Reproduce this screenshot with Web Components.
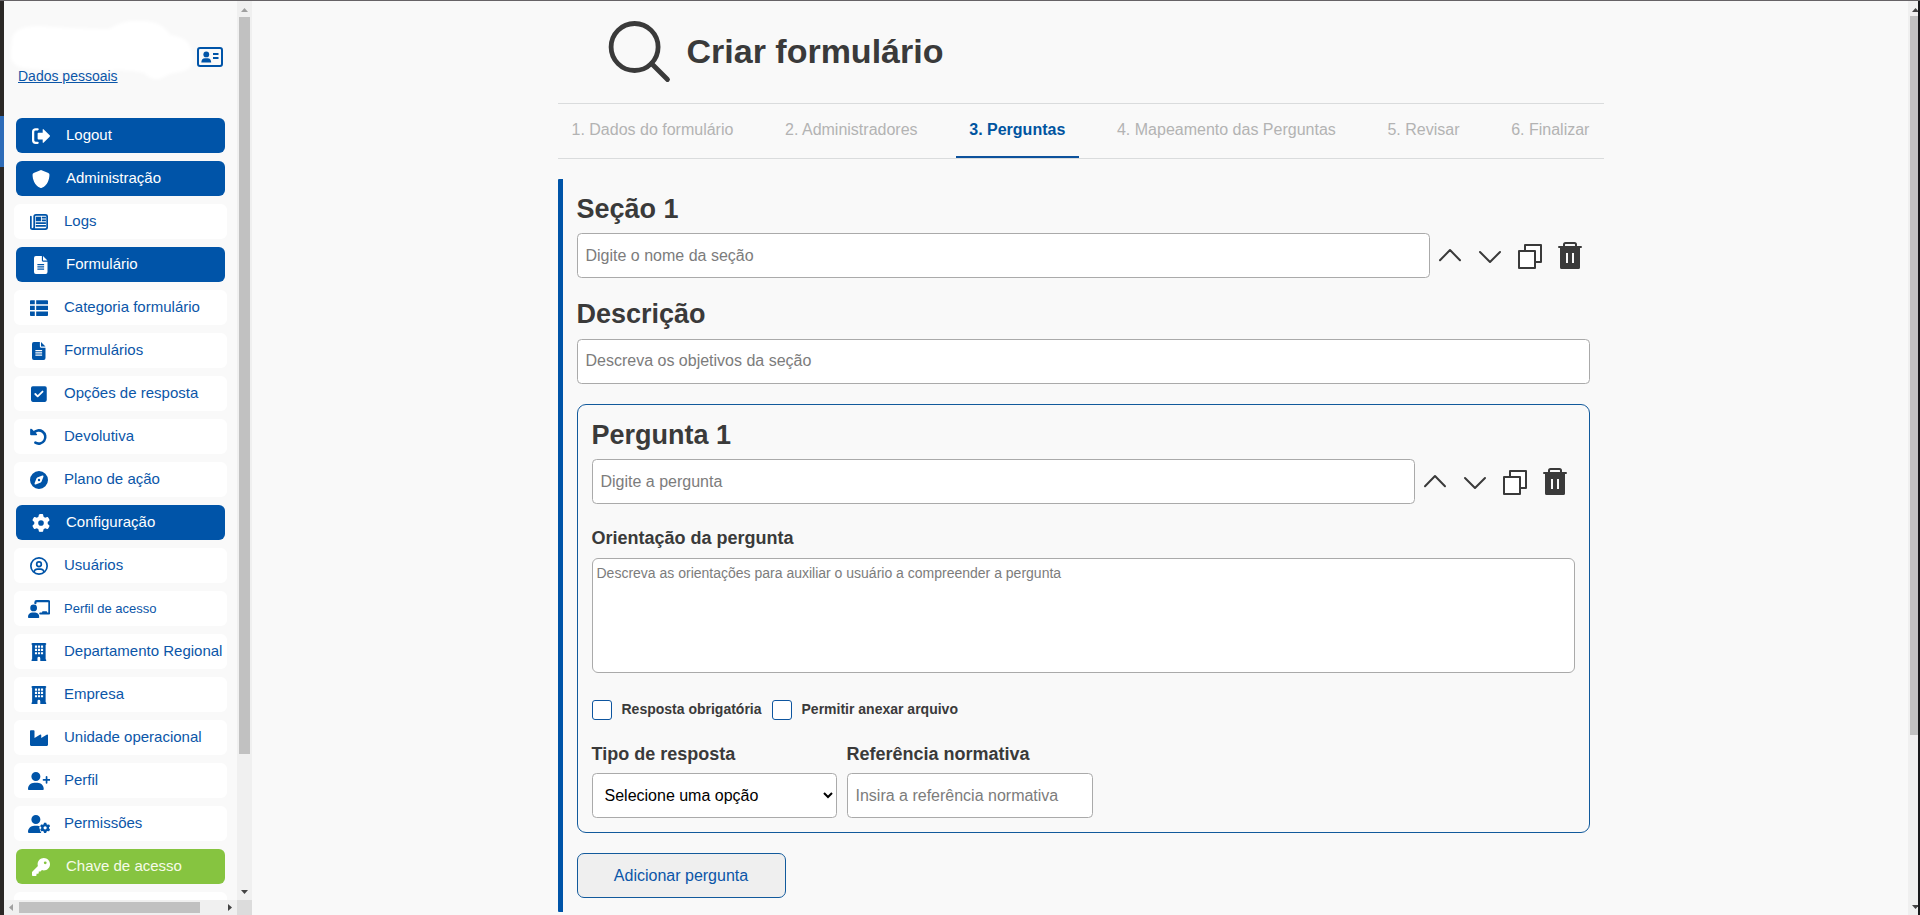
<!DOCTYPE html>
<html lang="pt-BR">
<head>
<meta charset="utf-8">
<title>Criar formulário</title>
<style>
html,body{margin:0;height:100%;overflow:hidden;background:#f9f9f9;font-family:"Liberation Sans",Arial,sans-serif;color:#3a3a3a}
</style>
</head>
<body>
<app-shell></app-shell>
<script>
const define = (name, html, setup) => customElements.define(name, class extends HTMLElement {
  connectedCallback() {
    if (this.shadowRoot) return;
    const root = this.attachShadow({mode: 'open'});
    const t = document.createElement('template');
    t.innerHTML = typeof html === 'function' ? html(this) : html;
    root.append(t.content.cloneNode(true));
    if (setup) setup(root, this);
  }
});

const GEAR = 'M495.9 166.6c3.2 8.7 .5 18.4-6.4 24.6l-43.3 39.4c1.1 8.3 1.7 16.8 1.7 25.4s-.6 17.1-1.7 25.4l43.3 39.4c6.9 6.2 9.6 15.9 6.4 24.6c-4.4 11.9-9.7 23.3-15.8 34.3l-4.7 8.1c-6.6 11-14 21.4-22.1 31.2c-5.9 7.2-15.7 9.6-24.5 6.8l-55.7-17.7c-13.4 10.3-28.2 18.9-44 25.4l-12.5 57.1c-2 9.1-9 16.3-18.2 17.8c-13.8 2.3-28 3.5-42.5 3.5s-28.7-1.2-42.5-3.5c-9.2-1.5-16.2-8.7-18.2-17.8l-12.5-57.1c-15.8-6.5-30.6-15.1-44-25.4L83.1 425.9c-8.8 2.8-18.6 .3-24.5-6.8c-8.1-9.8-15.5-20.2-22.1-31.2l-4.7-8.1c-6.1-11-11.4-22.4-15.8-34.3c-3.2-8.7-.5-18.4 6.4-24.6l43.3-39.4C64.6 273.1 64 264.6 64 256s.6-17.1 1.7-25.4L22.4 191.2c-6.9-6.2-9.6-15.9-6.4-24.6c4.4-11.9 9.7-23.3 15.8-34.3l4.7-8.1c6.6-11 14-21.4 22.1-31.2c5.9-7.2 15.7-9.6 24.5-6.8l55.7 17.7c13.4-10.3 28.2-18.9 44-25.4l12.5-57.1c2-9.1 9-16.3 18.2-17.8C227.3 1.2 241.5 0 256 0s28.7 1.2 42.5 3.5c9.2 1.5 16.2 8.7 18.2 17.8l12.5 57.1c15.8 6.5 30.6 15.1 44 25.4l55.7-17.7c8.8-2.8 18.6-.3 24.5 6.8c8.1 9.8 15.5 20.2 22.1 31.2l4.7 8.1c6.1 11 11.4 22.4 15.8 34.3zM256 336a80 80 0 1 0 0-160 80 80 0 1 0 0 160z';
const BUILDING = '<path fill-rule="evenodd" d="M48 0H400Q432 0 432 16V32Q432 48 416 48V464Q432 464 432 480V512H264V432a40 40 0 0 0-80 0V512H16V480Q16 464 32 464V48Q16 48 16 32V16Q16 0 48 0zM112 72v62h60V72zM198 72v62h60V72zM284 72v62h60V72zM112 166v62h60V166zM198 166v62h60V166zM284 166v62h60V166zM112 260v62h60V260zM198 260v62h60V260zM284 260v62h60V260z"/>';
const ICONS = {
  logout: [512, '<path d="M160 64H104Q32 64 32 136V376Q32 448 104 448H160" fill="none" stroke="currentColor" stroke-width="64" stroke-linecap="round"/><path d="M502 238L334 70Q304 44 304 86V160H184Q160 160 160 184V328Q160 352 184 352H304V426Q304 468 334 442L502 274Q520 256 502 238z"/>'],
  shield: [512, '<path d="M256 0L466 83Q496 96 496 132C494 250 448 430 282 508Q256 518 230 508C64 430 18 250 16 132Q16 96 46 83z"/>'],
  news: [512, '<path fill="none" stroke="currentColor" stroke-width="50" stroke-linecap="round" stroke-linejoin="round" d="M24 104V416Q24 456 64 456H440Q488 456 488 408V104Q488 56 440 56H168Q120 56 120 104V408Q120 456 64 456"/><path d="M164 108h148v130H164zM336 108h116v50H336zM336 188h116v50H336zM164 264h288v48H164zM164 340h288v48H164z"/>'],
  file: [384, '<path fill-rule="evenodd" d="M54 0H224V128Q224 160 256 160H384V458Q384 512 330 512H54Q0 512 0 458V54Q0 0 54 0zM256 0L384 128H256zM96 228v34H288V228zM96 292v34H288V292zM96 356v34H288V356z"/>'],
  list: [512, '<path d="M24 32H136V152H0V56Q0 32 24 32zM176 32H488Q512 32 512 56V152H176zM0 192H136V312H0zM176 192H512V312H176zM0 352H136V480H24Q0 480 0 456zM176 352H512V456Q512 480 488 480H176z"/>'],
  check: [448, '<path d="M50 32H398Q448 32 448 82V430Q448 480 398 480H50Q0 480 0 430V82Q0 32 50 32z"/><path d="M122 256L190 324L328 186" fill="none" stroke="#fff" stroke-width="52" stroke-linecap="round" stroke-linejoin="round"/>'],
  undo: [512, '<path fill="none" stroke="currentColor" stroke-width="72" stroke-linecap="round" d="M100 140A188 188 0 1 1 152 418"/><path d="M20 24Q44 16 60 34L196 170Q218 206 180 208H32Q4 208 4 176V50Q4 30 20 24z"/>'],
  compass: [512, '<path fill-rule="evenodd" d="M256 512A256 256 0 1 0 256 0A256 256 0 1 0 256 512zM306 326L162 382Q122 394 130 350L186 206L206 186L350 130Q390 120 382 162L326 306z"/><circle cx="256" cy="256" r="34"/>'],
  gear: [512, '<path d="' + GEAR + '"/>'],
  user: [512, '<g fill="none" stroke="currentColor" stroke-width="48"><circle cx="256" cy="256" r="232"/><circle cx="256" cy="206" r="66"/><path d="M112 426Q132 346 210 344H302Q380 346 400 426"/></g>'],
  board: [640, '<circle cx="160" cy="224" r="96"/><path d="M112 352H208Q320 362 320 490Q318 512 298 512H22Q2 512 0 490Q0 362 112 352z"/><path fill="none" stroke="currentColor" stroke-width="62" stroke-linecap="round" stroke-linejoin="round" d="M210 92V70Q210 32 248 32H574Q608 32 608 66V352Q608 384 574 384H350"/><path d="M400 400V344Q400 320 424 320H520Q544 320 544 344V400z"/>'],
  building: [448, BUILDING],
  factory: [512, '<path d="M24 32H104Q128 32 128 56V256L280 160Q320 142 320 180V256L472 160Q512 142 512 180V448Q512 480 480 480H32Q0 480 0 448V56Q0 32 24 32z"/>'],
  plus: [640, '<path d="M96 128a128 128 0 1 1 256 0A128 128 0 1 1 96 128zM0 482.3C0 383.8 79.8 304 178.3 304h91.4C368.2 304 448 383.8 448 482.3c0 16.4-13.3 29.7-29.7 29.7H29.7C13.3 512 0 498.7 0 482.3zM504 312V248H440c-13.3 0-24-10.7-24-24s10.7-24 24-24h64V136c0-13.3 10.7-24 24-24s24 10.7 24 24v64h64c13.3 0 24 10.7 24 24s-10.7 24-24 24H552v64c0 13.3-10.7 24-24 24s-24-10.7-24-24z"/>'],
  usergear: [640, '<path d="M224 0a128 128 0 1 1 0 256a128 128 0 1 1 0-256zM178 304H270Q304 304 338 318Q300 360 336 400Q326 440 380 512H30Q0 512 0 482C0 384 80 304 178 304z"/><path transform="translate(340 218) scale(.575)" d="' + GEAR + '"/>'],
  key: [512, '<path d="M336 352c97.2 0 176-78.8 176-176S433.2 0 336 0S160 78.8 160 176c0 18.7 2.9 36.8 8.3 53.7L7 391c-4.5 4.5-7 10.6-7 17v80c0 13.3 10.7 24 24 24h80c13.3 0 24-10.7 24-24V448h40c13.3 0 24-10.7 24-24V384h40c6.4 0 12.5-2.5 17-7l33.3-33.3c16.9 5.4 35 8.3 53.7 8.3zM376 96a40 40 0 1 1 0 80 40 40 0 1 1 0-80z"/>']
};

define('menu-icon', el => {
  const [w, body] = ICONS[el.getAttribute('name')];
  return `<style>:host{display:flex;justify-content:center;width:24px;flex:none}svg{display:block;height:18px;width:${w * 18 / 512}px}</style>
  <svg viewBox="0 0 ${w} 512" fill="currentColor">${body}</svg>`;
});

define('menu-item', el => `<style>
:host{display:flex;align-items:center;box-sizing:border-box;height:35px;flex:none;margin:0 10px;padding-left:13px;gap:13px;border-radius:6px;background:#fff;color:#0b56a8;font-size:15px;white-space:nowrap}
:host([kind=group]),:host([kind=key]){margin:0 12px;background:#0054a8;color:#fff}
:host([kind=key]){background:#86c440;color:#f6fbe9}
:host([small]){font-size:13px}
span{padding-bottom:2px}
:host([small]) span{padding-bottom:0}
menu-icon{color:#0054a8}
:host([kind]) menu-icon{color:#fff}
</style>${el.getAttribute('icon') ? `<menu-icon name="${el.getAttribute('icon')}"></menu-icon>` : ''}<span><slot></slot></span>`);

define('user-badge', `<style>
:host{display:block;height:117px;flex:none;position:relative}
.blob{position:absolute;left:0;top:10px}
.row{position:relative;display:flex;justify-content:space-between;padding:46px 14px 0 14px}
a{font-size:14px;line-height:16px;color:#0b56a8;text-decoration:underline;margin-top:21px}
.card{display:block}
</style>
<svg class="blob" width="200" height="76" viewBox="0 0 200 76"><path filter="url(#s)" fill="#fff" d="M8 28Q10 15 35 15Q75 18 105 18Q120 8 138 10Q158 10 166 24Q186 26 188 42Q192 58 176 61Q166 62 160 66Q150 72 140 62Q122 58 104 60L50 60L20 57Q5 55 7 40z"/><filter id="s"><feGaussianBlur stdDeviation="1.6"/></filter></svg>
<div class="row"><a>Dados pessoais</a>
<svg class="card" width="26" height="20" viewBox="0 0 26 20" fill="#0054a8"><rect x="1" y="1" width="24" height="18" rx="2" fill="none" stroke="#0054a8" stroke-width="2"/><circle cx="9.3" cy="7.4" r="2.9"/><path d="M4.3 15.5Q4.5 11.2 8 11.2H10.6Q14 11.2 14.2 15.5z"/><path d="M16 6h5.5v2H16zM16 10h5.5v2H16z"/></svg></div>`);

define('scroll-bar', el => {
  const v = el.hasAttribute('vertical');
  return `<style>
:host{display:flex;flex-direction:${v ? 'column' : 'row'};align-items:center;background:#f0f0f0;overflow:hidden;min-width:0;min-height:0}
.thumb{background:#c1c1c1;${v ? 'width:11px' : 'height:11px'};flex:0 0 ${el.getAttribute('size')}px}
.gap{flex:1}
svg{display:block;flex:none}
</style>
${v ? '<svg width="15" height="' + (el.getAttribute('cap') || 16) + '"><path d="M4 11L7.5 7L11 11z" fill="' + (el.getAttribute('start') || '#a0a0a0') + '"/></svg>' : '<svg width="15" height="15"><path d="M9 4L5 7.5L9 11z" fill="#a0a0a0"/></svg>'}
<div class="thumb"></div><div class="gap"></div>
${v ? '<svg width="15" height="15"><path d="M4 5L7.5 9L11 5z" fill="#444"/></svg>' : '<svg width="15" height="15"><path d="M6 4L10 7.5L6 11z" fill="#444"/></svg>'}`;
});

define('side-menu', `<style>
:host{display:grid;grid-template:minmax(0,1fr) 15px / 233px 15px;height:100%}
nav{display:flex;flex-direction:column;gap:8px;overflow:hidden;min-height:0}
user-badge{margin-bottom:-8px}
.corner{background:#dcdcdc}
</style>
<nav><user-badge></user-badge>
<menu-item kind="group" icon="logout">Logout</menu-item>
<menu-item kind="group" icon="shield">Administração</menu-item>
<menu-item icon="news">Logs</menu-item>
<menu-item kind="group" icon="file">Formulário</menu-item>
<menu-item icon="list">Categoria formulário</menu-item>
<menu-item icon="file">Formulários</menu-item>
<menu-item icon="check">Opções de resposta</menu-item>
<menu-item icon="undo">Devolutiva</menu-item>
<menu-item icon="compass">Plano de ação</menu-item>
<menu-item kind="group" icon="gear">Configuração</menu-item>
<menu-item icon="user">Usuários</menu-item>
<menu-item small icon="board">Perfil de acesso</menu-item>
<menu-item icon="building">Departamento Regional</menu-item>
<menu-item icon="building">Empresa</menu-item>
<menu-item icon="factory">Unidade operacional</menu-item>
<menu-item icon="plus">Perfil</menu-item>
<menu-item icon="usergear">Permissões</menu-item>
<menu-item kind="key" icon="key">Chave de acesso</menu-item>
<menu-item></menu-item></nav>
<scroll-bar vertical size="737"></scroll-bar>
<scroll-bar size="181"></scroll-bar><div class="corner"></div>`);

define('page-title', `<style>
:host{display:flex;align-items:center;height:102px;padding-left:50px;box-sizing:border-box}
h1{margin:0 0 0 14.5px;font-size:34px;line-height:40px;font-weight:700;padding-bottom:2px}
svg{display:block}
</style>
<svg width="64" height="64" viewBox="0 0 64 64" fill="none" stroke="#3a3a3a"><circle cx="26.6" cy="27" r="23.5" stroke-width="4.8"/><path d="M43.5 43.500L59.500 59.500" stroke-width="4.8" stroke-linecap="round"/></svg>
<h1><slot></slot></h1>`);

define('step-tabs', `<style>
:host{display:flex;justify-content:space-between;box-sizing:border-box;height:56px;border:solid #dadcdd;border-width:1px 0;font-size:16px;color:#b3b3b3;padding-right:.5px}
span{display:block;box-sizing:border-box;height:54px;padding:17px 14px 0 13.5px;line-height:18px;white-space:nowrap}
.on{color:#0054a0;font-weight:700;border-bottom:2px solid #0d529c}
</style>
<span>1. Dados do formulário</span><span>2. Administradores</span><span class="on">3. Perguntas</span><span>4. Mapeamento das Perguntas</span><span>5. Revisar</span><span>6. Finalizar</span>`);

define('text-field', el => `<style>
:host{display:block;height:45px}
input,select{display:block;box-sizing:border-box;width:100%;height:45px;margin:0;padding:0 7.5px;border:1px solid #aaa;border-radius:4.5px;background:#fff;font:16px "Liberation Sans",Arial,sans-serif;outline:0}
:host([raised]) input{padding-bottom:2px}
input::placeholder{color:#7c7c7c;opacity:1}
select{color:#000;padding:0 0 0 7.5px}
</style>${el.hasAttribute('select') ? `<select><option>${el.getAttribute('label')}</option></select>` : `<input placeholder="${el.getAttribute('label')}">`}`);

define('row-tools', `<style>
:host{display:flex;flex:none;height:44px;align-items:center}
svg{display:block}
</style>
<svg width="40" height="30" viewBox="0 0 40 30" fill="none" stroke="#3a3a3a" stroke-width="2" stroke-linecap="round" stroke-linejoin="round"><path d="M10 20.3L20 10L30 20.3"/></svg>
<svg width="40" height="30" viewBox="0 0 40 30" fill="none" stroke="#3a3a3a" stroke-width="2" stroke-linecap="round" stroke-linejoin="round"><path d="M10 12L20 22L30 12"/></svg>
<svg width="40" height="30" viewBox="0 0 40 30" fill="#fff" stroke="#3a3a3a" stroke-width="2" stroke-linejoin="round"><path d="M15 5H31V22H15z"/><path d="M9 11H25V28H9z"/></svg>
<svg width="40" height="30" viewBox="0 0 40 30" fill="#3a3a3a"><path d="M14 6.500V4.500Q14 3 15.500 3H24.500Q26 3 26 4.500V6.500M9 7H31" fill="none" stroke="#3a3a3a" stroke-width="2" stroke-linecap="round"/><path fill-rule="evenodd" d="M10 6H30V27.500Q30 29 28.500 29H11.500Q10 29 10 27.500zM16 13V23H18V13zM22 13V23H24V13z"/></svg>`);

define('check-option', `<style>
:host{display:flex;gap:9.5px;height:20px}
i{box-sizing:border-box;width:20px;height:20px;border:1px solid #0d559f;border-radius:3px;background:#fff}
span{font-size:14px;font-weight:700;line-height:16px;padding:1px .5px 0 0;white-space:nowrap}
</style><i></i><span><slot></slot></span>`);

define('question-card', `<style>
:host{display:block;box-sizing:border-box;height:429px;border:1px solid #125a9c;border-radius:9px;padding:14px 14px 0}
h2{margin:0 0 8px -.5px;font-size:27px;line-height:32px}
h3{margin:0 0 0 -.5px;font-size:18px;line-height:21px}
.row{display:flex}
.row text-field{flex:1}
.guide{margin-top:24px}
textarea{display:block;box-sizing:border-box;width:100%;height:115px;margin:9px 0 27px;padding:6px 3.500px;border:1px solid #aaa;border-radius:6px;resize:none;font:14px/16px "Liberation Sans",Arial,sans-serif;background:#fff}
textarea::placeholder{color:#7c7c7c}
.checks{display:flex;gap:10px;margin-bottom:24px}
.pair{display:grid;grid-template-columns:245px 246px;gap:8px 10px}
</style>
<h2>Pergunta 1</h2>
<div class="row"><text-field label="Digite a pergunta"></text-field><row-tools></row-tools></div>
<h3 class="guide">Orientação da pergunta</h3>
<textarea placeholder="Descreva as orientações para auxiliar o usuário a compreender a pergunta"></textarea>
<div class="checks"><check-option>Resposta obrigatória</check-option><check-option>Permitir anexar arquivo</check-option></div>
<div class="pair"><h3>Tipo de resposta</h3><h3>Referência normativa</h3><text-field select label="Selecione uma opção"></text-field><text-field label="Insira a referência normativa"></text-field></div>`);

define('form-section', `<style>
:host{display:block;box-sizing:border-box;height:733px;margin-top:20px;border-left:5px solid #0054a8;border-radius:1px;padding:14px 14px 0}
h2{margin:0 0 8px -.5px;font-size:27px;line-height:32px}
.row{display:flex}
.row text-field{flex:1}
h2.desc{margin:20px 0 9px -.5px}
question-card{margin:20px 0}
button{display:block;box-sizing:border-box;width:209px;height:45px;padding:0 1px 0 0;border:1px solid #125a9c;border-radius:7px;background:#efefef;color:#0b56a8;font:16px "Liberation Sans",Arial,sans-serif}
</style>
<h2>Seção 1</h2>
<div class="row"><text-field label="Digite o nome da seção"></text-field><row-tools></row-tools></div>
<h2 class="desc">Descrição</h2>
<text-field raised label="Descreva os objetivos da seção"></text-field>
<question-card></question-card>
<button>Adicionar pergunta</button>`);

define('app-shell', `<style>
:host{display:grid;grid-template-columns:4px 248px minmax(0,1fr) 10px 2px;grid-template-rows:914px;box-sizing:border-box;height:915px;border-top:1px solid #666366;background:#f9f9f9}
.edge{background:#2b2826;padding-top:115px}
.edge i{display:block;height:51px;background:#2e6cb8}
main{width:1046px;margin-left:306px}
.right{background:#18191b}
.page-bar{display:flex;overflow:hidden}
.page-bar scroll-bar{flex:none;width:15px}
</style>
<div class="edge"><i></i></div>
<side-menu></side-menu>
<main><page-title>Criar formulário</page-title><step-tabs></step-tabs><form-section></form-section></main>
<div class="page-bar"><scroll-bar vertical size="719" cap="15" start="#444"></scroll-bar></div>
<div class="right"></div>`);
</script>
</body>
</html>
